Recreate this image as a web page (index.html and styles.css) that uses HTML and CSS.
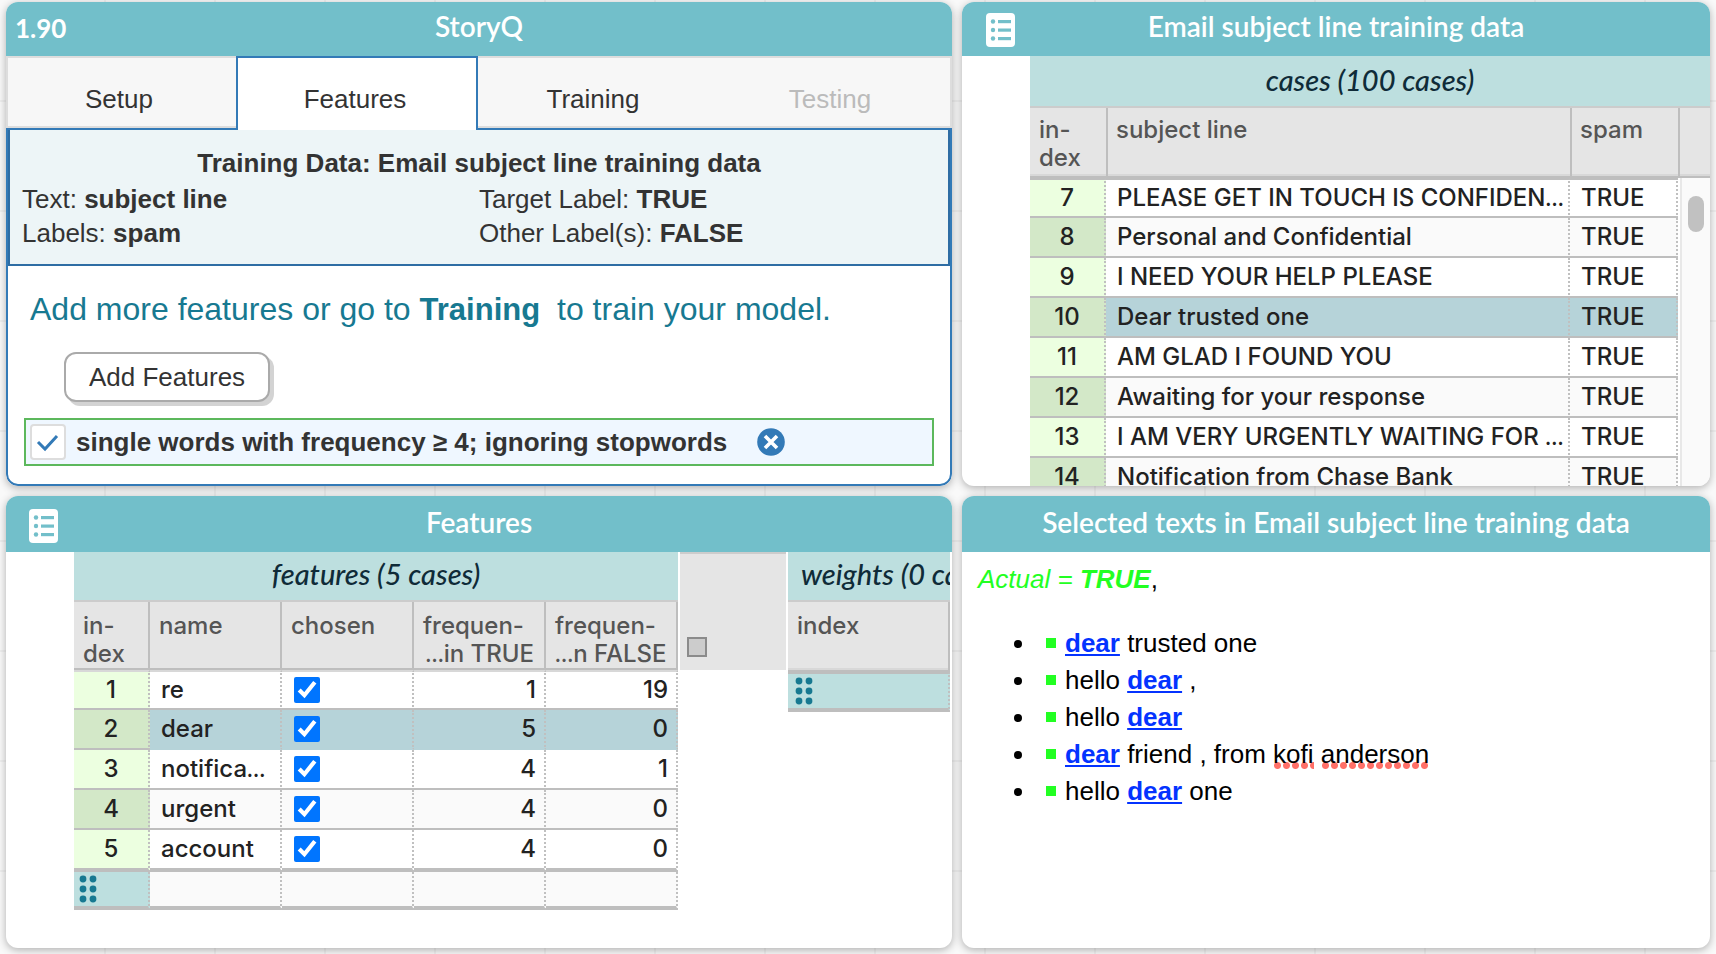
FILE: index.html
```html
<!DOCTYPE html>
<html lang="en">
<head>
<meta charset="utf-8">
<title>StoryQ</title>
<link rel="stylesheet" href="styles.css">
</head>
<body>
<svg class="defs" aria-hidden="true">
  <symbol id="table-icon" viewBox="0 0 29 34">
    <rect width="29" height="34" rx="4" fill="#fff"/>
    <g fill="#72bfca"><circle cx="7" cy="8.500" r="2.200"/><circle cx="7" cy="17" r="2.200"/><circle cx="7" cy="25.500" r="2.200"/>
    <rect x="12" y="7" width="13" height="3.200"/><rect x="12" y="15.500" width="13" height="3.200"/><rect x="12" y="24" width="13" height="3.200"/></g>
  </symbol>
  <symbol id="drag-icon" viewBox="0 0 18 28">
    <g fill="#177991"><circle cx="4" cy="4" r="3.400"/><circle cx="14" cy="4" r="3.400"/><circle cx="4" cy="14" r="3.400"/><circle cx="14" cy="14" r="3.400"/><circle cx="4" cy="24" r="3.400"/><circle cx="14" cy="24" r="3.400"/></g>
  </symbol>
</svg>
<main class="workspace">
  <section class="card">
    <header class="card-header"><span class="version">1.90</span><h2 class="card-title">StoryQ</h2></header>
    <div class="plugin">
      <nav class="tabs">
        <button class="tab" type="button">Setup</button>
        <button class="tab tab-active" type="button">Features</button>
        <button class="tab" type="button">Training</button>
        <button class="tab tab-disabled" type="button" disabled>Testing</button>
      </nav>
      <div class="tab-body">
        <div class="summary">
          <p class="summary-title">Training Data: Email subject line training data</p>
          <div class="summary-grid">
            <span>Text: <b>subject line</b></span><span>Target Label: <b>TRUE</b></span>
            <span>Labels: <b>spam</b></span><span>Other Label(s): <b>FALSE</b></span>
          </div>
        </div>
        <p class="prompt">Add more features or go to <button class="prompt-link" type="button">Training</button> to train your model.</p>
        <button class="add-button" type="button">Add Features</button>
        <div class="feature">
          <input class="feature-check" id="feature-1" type="checkbox" checked>
          <label class="feature-label" for="feature-1">single words with frequency ≥ 4; ignoring stopwords</label>
          <button class="feature-remove" type="button" aria-label="Remove feature">
            <svg width="28" height="28" viewBox="0 0 28 28"><circle cx="14" cy="14" r="13.800" fill="#337ab7"/><path d="M8 8l12 12M20 8L8 20" stroke="#fff" stroke-width="3.600"/></svg>
          </button>
        </div>
      </div>
    </div>
  </section>

  <section class="card">
    <header class="card-header"><svg class="header-icon"><use href="#table-icon"/></svg><h2 class="card-title">Email subject line training data</h2></header>
    <div class="case-view">
      <div class="collection collection-fill">
        <div class="collection-title collection-title-tall">cases (100 cases)</div>
        <table class="cases">
          <colgroup><col class="col-index"><col><col class="col-spam"><col class="col-scroll"></colgroup>
          <thead><tr><th>in-<br>dex</th><th>subject line</th><th>spam</th><th></th></tr></thead>
          <tbody>
            <tr><td class="index">7</td><td>PLEASE GET IN TOUCH IS CONFIDEN<span class="more">…</span></td><td>TRUE</td></tr>
            <tr><td class="index">8</td><td>Personal and Confidential</td><td>TRUE</td></tr>
            <tr><td class="index">9</td><td>I NEED YOUR HELP PLEASE</td><td>TRUE</td></tr>
            <tr class="selected"><td class="index">10</td><td>Dear trusted one</td><td>TRUE</td></tr>
            <tr><td class="index">11</td><td>AM GLAD I FOUND YOU</td><td>TRUE</td></tr>
            <tr><td class="index">12</td><td>Awaiting for your response</td><td>TRUE</td></tr>
            <tr><td class="index">13</td><td>I AM VERY URGENTLY WAITING FOR <span class="more">…</span></td><td>TRUE</td></tr>
            <tr><td class="index">14</td><td>Notification from Chase Bank</td><td>TRUE</td></tr>
          </tbody>
        </table>
        <div class="scrollbar"><div class="scroll-thumb"></div></div>
      </div>
    </div>
  </section>

  <section class="card">
    <header class="card-header card-header-tall"><svg class="header-icon"><use href="#table-icon"/></svg><h2 class="card-title">Features</h2></header>
    <div class="case-view case-view-inset">
      <div class="collection">
        <div class="collection-title">features (5 cases)</div>
        <table class="features">
          <colgroup><col class="col-index"><col class="col-attr"><col class="col-attr"><col class="col-attr"><col class="col-attr"></colgroup>
          <thead><tr><th>in-<br>dex</th><th>name</th><th>chosen</th><th>frequen-<div class="right"><span class="more">…</span>in TRUE</div></th><th>frequen-<div class="right"><span class="more">…</span>n FALSE</div></th></tr></thead>
          <tbody>
            <tr><td class="index">1</td><td>re</td><td><input type="checkbox" aria-label="re chosen" checked></td><td class="right">1</td><td class="right">19</td></tr>
            <tr class="selected"><td class="index">2</td><td>dear</td><td><input type="checkbox" aria-label="dear chosen" checked></td><td class="right">5</td><td class="right">0</td></tr>
            <tr><td class="index">3</td><td>notifica<span class="more">…</span></td><td><input type="checkbox" aria-label="notification chosen" checked></td><td class="right">4</td><td class="right">1</td></tr>
            <tr><td class="index">4</td><td>urgent</td><td><input type="checkbox" aria-label="urgent chosen" checked></td><td class="right">4</td><td class="right">0</td></tr>
            <tr class="row-last"><td class="index">5</td><td>account</td><td><input type="checkbox" aria-label="account chosen" checked></td><td class="right">4</td><td class="right">0</td></tr>
            <tr class="row-input"><td class="drag"><svg class="drag-dots"><use href="#drag-icon"/></svg></td><td></td><td></td><td></td><td></td></tr>
          </tbody>
        </table>
      </div>
      <div class="spacer"><button class="expand" type="button" aria-label="Expand all"></button></div>
      <div class="collection collection-fill">
        <div class="collection-title collection-title-start">weights (0 cases)</div>
        <table class="weights">
          <thead><tr><th>index</th></tr></thead>
          <tbody><tr class="row-input"><td class="drag"><svg class="drag-dots"><use href="#drag-icon"/></svg></td></tr></tbody>
        </table>
      </div>
    </div>
  </section>

  <section class="card">
    <header class="card-header card-header-tall"><h2 class="card-title">Selected texts in Email subject line training data</h2></header>
    <div class="texts">
      <p class="actual"><i>Actual = <b>TRUE</b></i>,</p>
      <ul class="text-list">
        <li><span class="mark"></span><b class="hit">dear</b> trusted one</li>
        <li><span class="mark"></span>hello <b class="hit">dear</b> ,</li>
        <li><span class="mark"></span>hello <b class="hit">dear</b></li>
        <li><span class="mark"></span><b class="hit">dear</b> friend , from <span class="misspelled">kofi</span> <span class="misspelled">anderson</span></li>
        <li><span class="mark"></span>hello <b class="hit">dear</b> one</li>
      </ul>
    </div>
  </section>
</main>
</body>
</html>
```
FILE: styles.css
```css
* { box-sizing: border-box; }

body {
  margin: 0;
  background-color: #f9f9f9;
  background-image:
    linear-gradient(to right, #efefef 2px, transparent 2px),
    linear-gradient(to bottom, #efefef 2px, transparent 2px);
  background-size: 110px 110px;
  background-position: 104px 100px;
  font-family: "Liberation Sans", Arial, sans-serif;
  font-size: 26px;
  color: #333;
}

button { font: inherit; color: inherit; cursor: pointer; }
p, h2 { margin: 0; }
.defs { display: none; }

.workspace {
  display: grid;
  grid-template-columns: minmax(0, 946fr) minmax(0, 748fr);
  grid-template-rows: minmax(0, 484fr) minmax(0, 452fr);
  gap: 10px;
  height: 100vh;
  padding: 2px 6px 6px;
}

.card {
  display: flex;
  flex-direction: column;
  overflow: hidden;
  border-radius: 12px;
  background: #fff;
  box-shadow: 0 2px 8px rgba(0, 0, 0, 0.3);
}

.card-header {
  position: relative;
  flex: none;
  height: 54px;
  background: #72bfca;
  color: #fff;
  font-family: Lato, sans-serif;
  font-weight: 600;
}
.card-header-tall { height: 56px; padding-top: 2px; }
.card-title {
  font-size: 28px;
  font-weight: 600;
  line-height: 48px;
  text-align: center;
}
.version {
  position: absolute;
  left: 9px;
  top: 2px;
  font-weight: 700;
  line-height: 48px;
}
.header-icon {
  position: absolute;
  left: 24px;
  top: 11px;
  width: 29px;
  height: 34px;
}
.card-header-tall .header-icon { left: 23px; top: 13px; }

/* StoryQ panel */
.plugin { display: flex; flex: 1; flex-direction: column; }
.tabs {
  display: grid;
  grid-template-columns: 230fr 242fr 234fr 240fr;
  background: #f7f7f7;
  box-shadow: inset 0 0 0 2px #ddd;
}
.tab {
  height: 74px;
  padding: 12px 4px 0 0;
  margin: 0 0 -2px;
  border: 0;
  background: transparent;
}
.tab-active {
  z-index: 1;
  border: 2px solid #337ab7;
  border-bottom: 0;
  background: #fff;
  padding-top: 10px;
}
.tab-disabled { color: #bbb; }
.tab-body {
  flex: 1;
  border: 2px solid #337ab7;
  border-radius: 0 0 12px 12px;
}
.summary {
  padding: 14px 12px 14px;
  border: solid #2e6da4;
  border-width: 0 2px 2px;
  background: #edf5f7;
}
.summary-title {
  line-height: 38px;
  font-weight: bold;
  text-align: center;
}
.summary-grid {
  display: grid;
  grid-template-columns: 1fr 1fr;
  line-height: 34px;
}
.prompt {
  padding: 21px 22px 20px;
  color: #177991;
  font-size: 32px;
  line-height: 44px;
}
.prompt-link {
  margin: 0 8px 0 0;
  padding: 0;
  border: 0;
  background: none;
  font-size: 31px;
  font-weight: bold;
}
.add-button {
  display: block;
  height: 50px;
  margin: 0 0 16px 56px;
  padding: 0 23px;
  border: 2px solid #aaa;
  border-radius: 12px;
  background: #fff;
  box-shadow: 4px 4px 0 #d3d3d3;
}
.feature {
  display: flex;
  align-items: center;
  height: 48px;
  margin: 0 16px;
  padding: 0 4px;
  border: 2px solid #5cb85c;
  background: #eff7ff;
  font-weight: bold;
}
.feature-check {
  flex: none;
  width: 36px;
  height: 36px;
  margin: 0;
  appearance: none;
  border: 2px solid #ddd;
  border-radius: 4px;
  background: #fff url("data:image/svg+xml,%3Csvg xmlns='http://www.w3.org/2000/svg' viewBox='0 0 32 32'%3E%3Cpath d='M6 16l7 7L25 10' fill='none' stroke='%23337ab7' stroke-width='3'/%3E%3C/svg%3E");
}
.feature-label { padding: 0 30px 0 10px; }
.feature-remove {
  display: flex;
  padding: 0;
  border: 0;
  background: none;
}

/* Case tables */
.case-view {
  display: flex;
  flex: 1;
  min-height: 0;
  padding-left: 68px;
  overflow: hidden;
  font-family: Inter, sans-serif;
  font-size: 24px;
  font-weight: 500;
  color: #222;
}
.case-view-inset { padding-right: 2px; }
.collection { position: relative; flex: none; }
.collection-fill { flex: 1; min-width: 0; overflow: hidden; }
.collection-title {
  height: 50px;
  border-bottom: 2px solid #ccc;
  background: #bddfdf;
  color: #0f2b38;
  font: italic 500 29px/44px Lato, sans-serif;
  text-align: center;
  white-space: nowrap;
}
.collection-title-tall { height: 52px; line-height: 48px; }
.collection-title-start { padding-left: 13px; text-align: left; }

table {
  width: 100%;
  border-collapse: separate;
  border-spacing: 0;
  table-layout: fixed;
}
.col-index { width: 76px; }
.col-attr { width: 132px; }
.col-spam { width: 108px; }
.col-scroll { width: 32px; }
.features { width: 604px; }

th {
  height: 68px;
  padding: 10px 10px 0 9px;
  border: solid #bebebe;
  border-width: 0 2px 2px 0;
  background: #e5e5e5;
  color: #555;
  font-weight: 500;
  line-height: 28px;
  text-align: left;
  vertical-align: top;
  white-space: nowrap;
}
td {
  height: 40px;
  padding: 0 8px 0 11px;
  border-right: 2px dotted #c0c0c0;
  border-bottom: 2px solid #bebebe;
  background: #fff;
  line-height: 36px;
  white-space: nowrap;
}
.cases td { padding-right: 0; }
.features tbody tr:first-child td { border-top: 2px solid #d8d8d8; }
.cases tbody tr:first-child td { border-top: 2px solid #bebebe; }
.cases th,
.weights th { height: 70px; box-shadow: inset 0 -2px #d8d8d8; }
.cases th {
  padding: 8px 8px 0;
  border-width: 0 0 2px 2px;
}
.cases th:first-child { padding-left: 9px; border-left: 0; }
tr:nth-child(even) td { background: #fafafa; }
td.index {
  padding: 0;
  background: #ecffe0;
  text-align: center;
}
tr:nth-child(even) td.index { background: #d3e8c8; }
.selected td:not(.index) { background: #b6d3d9; }
.features .selected td:not(.index) { border-bottom-color: #b6d3d9; }
.row-last td { height: 42px; border-bottom-width: 4px; }
.row-input td { height: 38px; border-bottom-width: 4px; }
.weights .row-input td { height: 40px; border-top: 2px solid #bebebe; }
.row-input td.drag { padding: 0 0 0 5px; background: #bddfdf; }
.weights .row-input td.drag { padding-left: 7px; }
.drag-dots { display: block; width: 18px; height: 28px; }
.right { text-align: right; }
.more { font-family: Lato, sans-serif; line-height: 1; }
td input {
  display: block;
  width: 26px;
  height: 26px;
  margin: 0 0 0 1px;
}

.scrollbar {
  position: absolute;
  top: 122px;
  right: 0;
  bottom: 0;
  width: 30px;
  padding: 18px 6px;
  border-left: 2px solid #e8e8e8;
  background: #fafafa;
}
.scroll-thumb {
  width: 16px;
  height: 36px;
  border-radius: 8px;
  background: #c1c1c1;
}
.spacer {
  flex: none;
  width: 106px;
  height: 118px;
  margin: 0 2px;
  padding: 83px 0 0 7px;
  border-top: 2px solid #ccc;
  background: #e5e5e5;
}
.expand {
  display: block;
  width: 20px;
  height: 20px;
  padding: 0;
  border: 2px solid #8b8b8b;
  background: #ccc;
}

/* Selected texts */
.texts { padding: 9px 16px; color: #000; line-height: 37px; }
.actual i { color: #2f2; }
.text-list { margin: 27px 0 0; padding-left: 59px; }
.text-list li { padding-left: 9px; }
.mark {
  display: inline-block;
  width: 10px;
  height: 10px;
  margin-right: 9px;
  vertical-align: 4px;
  background: #2f2;
}
.hit { color: #0433ff; text-decoration: underline; }
.misspelled {
  background: radial-gradient(circle, #ff7068 3px, transparent 4px) 0 100% / 9px 7px repeat-x;
}
```
